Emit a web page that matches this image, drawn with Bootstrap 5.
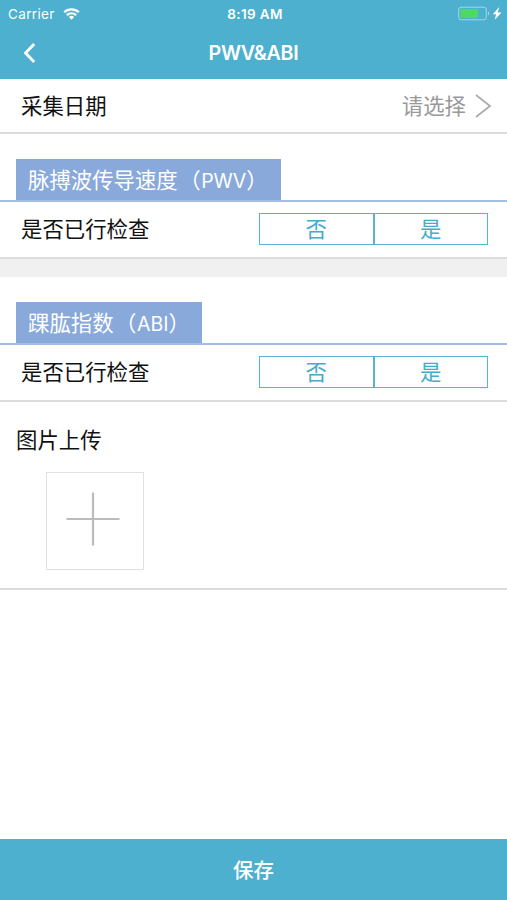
<!DOCTYPE html>
<html lang="zh-CN">
<head>
<meta charset="utf-8">
<meta name="viewport" content="width=device-width, initial-scale=1">
<title>PWV&amp;ABI</title>
<link href="https://cdn.jsdelivr.net/npm/bootstrap@5.3.0/dist/css/bootstrap.min.css" rel="stylesheet">
<style>
body{font-family:Inter,"Noto Sans CJK SC",sans-serif;font-size:21.4px;line-height:32px;color:#111;height:900px;overflow:hidden}
.brand-bg{background:#4eb0cf}
.status-bar{height:27px;font-size:13.5px;line-height:28px;letter-spacing:.35px;padding:0 5px 0 8px}
.status-bar>*{flex:1 1 0}
.title-bar{height:52px;grid-template-columns:60px 1fr 60px}
.page-title{font-size:19.7px;letter-spacing:-.3px;padding-top:1px}
.line-row{border-bottom:2px solid #dcdcdc}
.date-row{height:55px;padding:0 15px 0 21px}
.hint{color:#999}
.section-head{border-bottom:2px solid #a5bde3;padding:24.5px 0 0 16px}
.section-tag{background:#88a9da;color:#fff;height:41px;line-height:42px;padding-left:12px}
.section-tag .abbr{margin-left:1.5px}
.section-tag .latin{font-size:19.5px;margin-left:.5px}
.tag-pwv{width:265px}
.tag-abi{width:186px}
.check-row{height:57px;padding:0 19px 0 21px}
.choice{width:229px;height:32px}
.choice .btn{--bs-btn-color:#45acc9;--bs-btn-border-color:#56b4cf;--bs-btn-hover-bg:#4eb0cf;--bs-btn-hover-color:#fff;border-width:1.5px;font-size:21.4px;line-height:28px}
.gap-band{height:18.5px;background:#f0f0f0}
.upload{height:188.5px;padding:22.5px 16px 0}
.add-box{width:98px;height:98px;border:1.5px solid #e2e2e2;margin:16px 0 0 30px;padding:0 4px 4px 0;background:#fff}
.save{height:61px;font-size:20.5px;padding-top:3px}
</style>
<script src="https://cdn.jsdelivr.net/npm/bootstrap@5.3.0/dist/js/bootstrap.bundle.min.js"></script>
</head>
<body class="d-flex flex-column bg-white">
<header class="brand-bg text-white">
  <div class="status-bar d-flex align-items-center">
    <div class="d-flex align-items-center gap-2"><span>Carrier</span>
      <svg width="17" height="14" viewBox="0 0 18 14" fill="none" stroke="#fff" stroke-width="2.3"><path d="M1.2 5.2a11.2 11.2 0 0 1 15.6 0M4.1 8.2a7 7 0 0 1 9.8 0"/><path d="M9 13 6.2 10.2a4 4 0 0 1 5.6 0Z" fill="#fff" stroke="none"/></svg>
    </div>
    <div class="text-center fw-semibold">8:19 AM</div>
    <div class="d-flex justify-content-end">
      <svg width="44" height="15" viewBox="0 0 44 15"><rect x=".7" y="1.2" width="27.6" height="12.6" rx="2.5" fill="none" stroke="#a6d7e7"/><rect x="2.5" y="3" width="17.5" height="9" rx="1" fill="#4cd964"/><path d="M30 5.2q2 2.2 0 4.6Z" fill="#a6d7e7"/><path d="M41.2 1 34.8 8.2h3.3L36.8 13.8 43.5 6.5h-3.7Z" fill="#fff"/></svg>
    </div>
  </div>
  <div class="title-bar d-grid align-items-center text-center">
    <a href="#" class="d-flex ps-4" aria-label="返回"><svg width="12" height="20" viewBox="0 0 12 20" fill="none" stroke="#fff" stroke-width="2.8"><path d="M10.2 1 1.5 10l8.7 9"/></svg></a>
    <h1 class="page-title m-0 fw-semibold">PWV&amp;ABI</h1>
  </div>
</header>
<main class="flex-grow-1">
  <div class="line-row date-row d-flex align-items-center justify-content-between">
    <span>采集日期</span>
    <span class="hint d-flex align-items-center gap-2"><span>请选择</span><svg width="18" height="24" viewBox="0 0 18 24" fill="none" stroke="#aaa" stroke-width="1.7"><path d="M2 1 16 12 2 23"/></svg></span>
  </div>
  <section>
    <div class="section-head"><div class="section-tag tag-pwv">脉搏波传导速度<span class="abbr">（<span class="latin">PWV</span>）</span></div></div>
    <div class="line-row check-row d-flex align-items-center justify-content-between">
      <span>是否已行检查</span>
      <div class="choice d-flex"><button class="btn rounded-0 p-0 w-50">否</button><button class="btn rounded-0 p-0 w-50">是</button></div>
    </div>
  </section>
  <div class="gap-band"></div>
  <section>
    <div class="section-head"><div class="section-tag tag-abi">踝肱指数<span class="abbr">（<span class="latin">ABI</span>）</span></div></div>
    <div class="line-row check-row d-flex align-items-center justify-content-between">
      <span>是否已行检查</span>
      <div class="choice d-flex"><button class="btn rounded-0 p-0 w-50">否</button><button class="btn rounded-0 p-0 w-50">是</button></div>
    </div>
  </section>
  <section class="upload line-row">
    <div>图片上传</div>
    <div class="add-box d-flex align-items-center justify-content-center"><svg width="54" height="54" viewBox="0 0 54 54" stroke="#bbb" stroke-width="2.2"><path d="M27 .5v53M.5 27h53"/></svg></div>
  </section>
</main>
<button class="save brand-bg border-0 text-white fw-medium w-100 flex-shrink-0">保存</button>
</body>
</html>
